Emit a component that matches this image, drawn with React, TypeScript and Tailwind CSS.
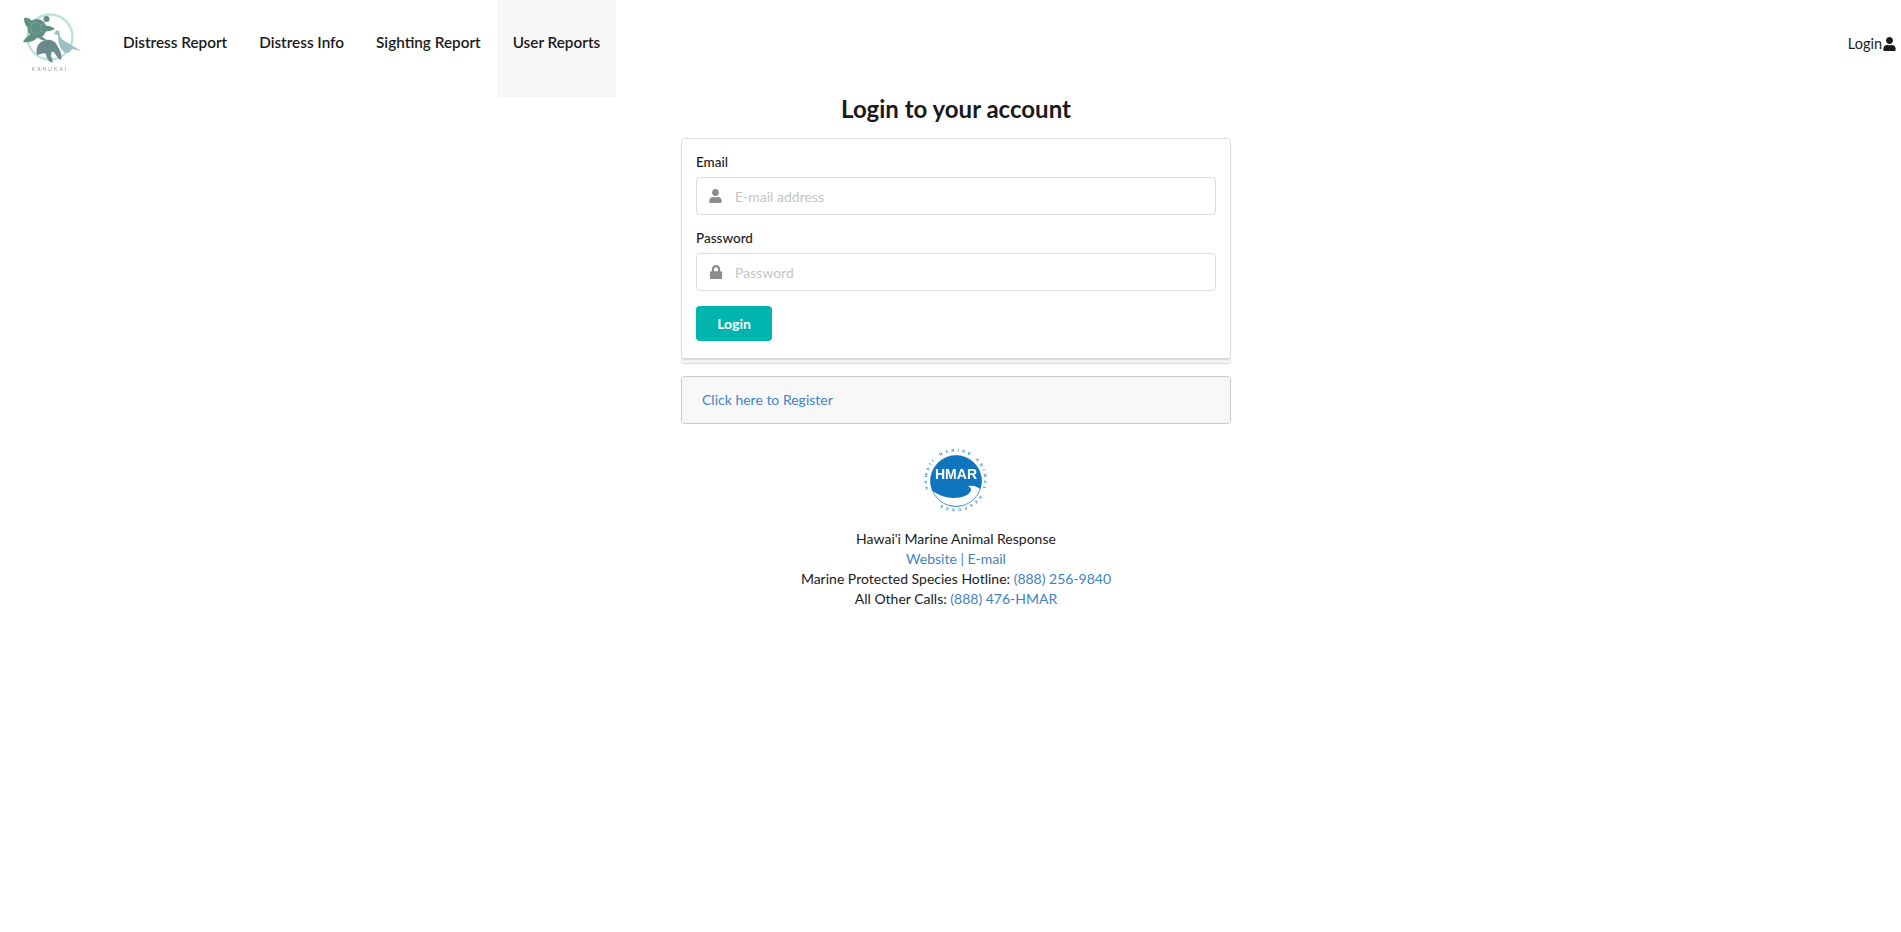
import { FaLock, FaUser } from 'react-icons/fa'

const linkClass = 'text-[#4183c4]'

const KahukaiLogo = () => (
  <svg viewBox="20 12 64 62" className="h-[62px] w-[64px] blur-[0.5px]">
    <circle cx="50" cy="37" r="22.5" fill="none" stroke="#bfe2dc" strokeWidth="2.4" />
    {/* turtle */}
    <circle cx="46.5" cy="19" r="3" fill="#5f8f83" />
    <path d="M43 26 C47 25 52 26 55 29 C51 31 46 32 42 31 Z" fill="#5f8f83" />
    <path d="M33 22 C30 18 27 17 24 18 C24 23 26 27 30 29 Z" fill="#5f8f83" />
    <path d="M31 34 C28 36 25 38 23 42 C28 43 33 42 37 38 Z" fill="#5f8f83" />
    <path d="M41 35 C43 38 45 39 47 40 C44 41 40 40 38 37 Z" fill="#5f8f83" />
    <circle cx="37" cy="28.5" r="9.5" fill="#5f8f83" />
    <path d="M31 24 L36 22 L41 25 L41 31 L36 34 L31 32 Z M36 22 V18 M41 25 L45 23 M41 31 L45 33 M31 32 L28 34 M31 24 L28 22" fill="none" stroke="#86ada3" strokeWidth="0.6" />
    {/* monk seal */}
    <path d="M37 55 C35 48 39 41 46 40 C52 39 56 42 58 47 C61 51 62 56 61 60 C58 59 56 55 54 52 C52 51 51 52 51 56 L53 62 C50 63 47 60 46 54 C44 52 41 54 37 55 Z" fill="#6b8a90" />
    {/* bird */}
    <path d="M55 32 C56 30 58 30 59 31 C60 35 60 37 63 40 L81 51 L72 49 C70 53 67 54 64 52 C60 49 58 43 58 35 L54 34 Z" fill="#9dc0c5" />
    <text x="50" y="71" textAnchor="middle" fontFamily="Lato, sans-serif" fontSize="5" letterSpacing="2" fill="#8a9a9a">
      KAHUKAI
    </text>
  </svg>
)

const HmarLogo = () => (
  <svg viewBox="0 0 64 64" className="h-[64px] w-[64px] overflow-visible blur-[0.4px]">
    <defs>
      <path id="hmar-ring" d="M4.5 40 A28.5 28.5 0 1 1 4.6 40.3" />
    </defs>
    <text fontFamily="Liberation Sans, sans-serif" fontSize="4" fontWeight="700" letterSpacing="3.1" fill="#2f87c8">
      <textPath href="#hmar-ring">HAWAII MARINE ANIMAL RESPONSE</textPath>
    </text>
    <circle cx="32" cy="32" r="25.5" fill="#0f75bc" />
    <path d="M7 41 C14 46 22 49 30 49 C38 49 46 46 47 41 C47 39 46 38 44 37 C50 36 55 38 58 42 C54 52 44 57 32 57 C20 57 11 51 7 41 Z" fill="#fff" />
    <circle cx="32" cy="32" r="25.5" fill="none" stroke="#0f75bc" strokeWidth="0.7" />
    <text x="32" y="30" textAnchor="middle" fontFamily="Liberation Sans, sans-serif" fontSize="14" fontWeight="700" fill="#fff">
      HMAR
    </text>
  </svg>
)

const Field = ({ label, placeholder, icon }: { label: string; placeholder: string; icon: React.ReactNode }) => (
  <div className="mb-[14px]">
    <label className="mb-[6px] block text-[13.5px] font-medium leading-[18px]">{label}</label>
    <div className="flex h-[38px] items-center rounded-[4px] border border-[#dcdddd] bg-white">
      <span className="flex w-[37px] shrink-0 justify-center text-[#8c8c8c]">{icon}</span>
      <span className="pl-[1px] pt-[1px] text-[14px] text-[#c4c4c4]">{placeholder}</span>
    </div>
  </div>
)

export default function App() {
  return (
    <div className="min-h-[932px] bg-white font-['Lato',sans-serif] text-[14px] leading-[20px] text-[#1a1a1a]">
      <nav className="flex h-[97px] items-stretch">
        <div className="flex w-[107px] shrink-0 items-start pl-[20px] pt-[12px]">
          <KahukaiLogo />
        </div>
        {['Distress Report', 'Distress Info', 'Sighting Report'].map((name) => (
          <a key={name} className="flex items-center px-[16px] pb-[13px] text-[15.3px] font-semibold">
            {name}
          </a>
        ))}
        <a className="flex items-center bg-[#f7f7f7] px-[16px] pb-[13px] text-[15.3px] font-semibold">User Reports</a>
        <div className="ml-auto flex items-center pb-[9px] pr-[4px] text-[14.5px]">
          <span>Login</span>
          <FaUser className="h-[14px] w-[15px]" />
        </div>
      </nav>

      <main className="flex justify-center pl-[11px]">
        <div className="w-[550px]">
          <h2 className="mb-[14px] mt-[-4px] text-center text-[24px] font-bold leading-[31px]">Login to your account</h2>

          <div className="rounded-[4px] border border-[#dedede] bg-white shadow-[0_3px_0_#f2f2f2,0_4px_1px_rgba(0,0,0,0.16)]">
            <div className="h-[220px] border-b border-[#d4d4d4] px-[14px] pt-[14px]">
              <Field label="Email" placeholder="E-mail address" icon={<FaUser className="h-[14px] w-[15px]" />} />
              <Field label="Password" placeholder="Password" icon={<FaLock className="h-[14px] w-[14px]" />} />
              <button className="mt-[1px] h-[35px] w-[76px] rounded-[4px] bg-[#00b5ad] text-[14px] font-bold text-white">Login</button>
            </div>
          </div>

          <div className="mt-[16px] flex h-[48px] items-center rounded-[4px] border border-[#c9c9c9] bg-[#f8f8f9] px-[20px]">
            <a className={linkClass}>Click here to Register</a>
          </div>

          <div className="mt-[25px] flex flex-col items-center text-center">
            <HmarLogo />
            <p className="mt-[16px]">Hawai&#39;i Marine Animal Response</p>
            <p>
              <a className={linkClass}>Website</a> <span className={linkClass}>|</span> <a className={linkClass}>E-mail</a>
            </p>
            <p>
              Marine Protected Species Hotline: <a className={linkClass}>(888) 256-9840</a>
            </p>
            <p>
              All Other Calls: <a className={linkClass}>(888) 476-HMAR</a>
            </p>
          </div>
        </div>
      </main>
    </div>
  )
}
